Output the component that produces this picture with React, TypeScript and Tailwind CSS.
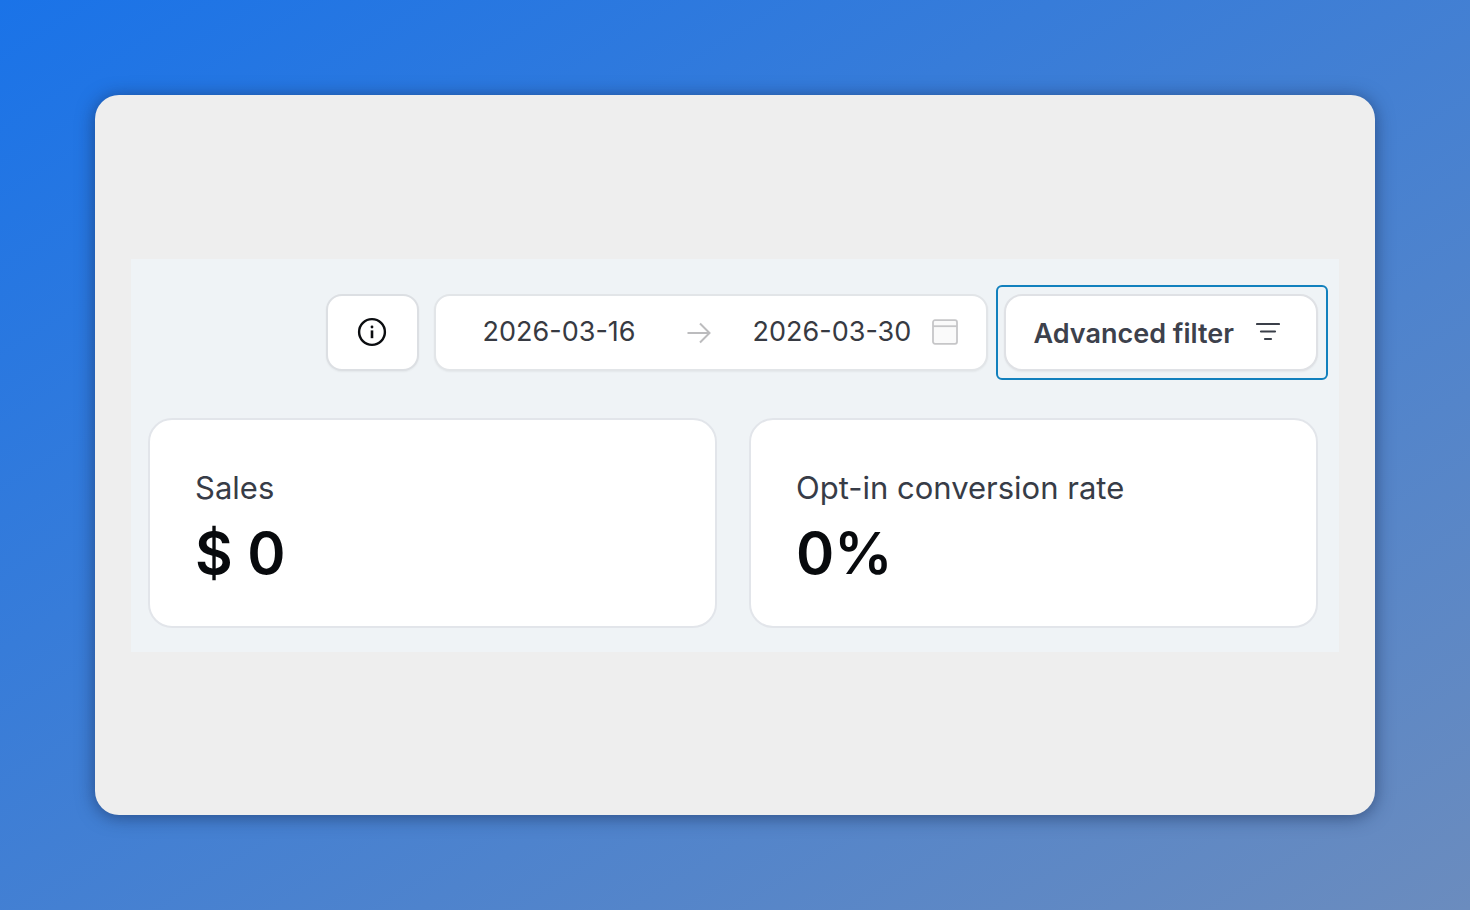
import { useState } from "react";

function InfoIcon() {
  return (
    <svg viewBox="0 0 30 30" className="size-[30px]" fill="none" aria-hidden="true">
      <circle cx="15" cy="15" r="12.9" stroke="#0b0d10" strokeWidth="2.4" />
      <circle cx="15" cy="10" r="1.4" fill="#0b0d10" />
      <path d="M15 13.4v7.8" stroke="#0b0d10" strokeWidth="2.6" />
    </svg>
  );
}

function ArrowIcon() {
  return (
    <svg viewBox="0 0 24 24" className="size-6 shrink-0" fill="none" stroke="#bcbcbe" strokeWidth="2" aria-hidden="true">
      <path d="M.5 13h22M13 3.5l9.5 9.5L13 22.5" />
    </svg>
  );
}

function CalendarIcon() {
  return (
    <svg viewBox="0 0 26 26" className="size-[26px] shrink-0" fill="#fafafa" stroke="#c6c6c8" strokeWidth="1.8" aria-hidden="true">
      <rect x="1" y="1.2" width="24" height="23.6" rx="2" />
      <path d="M1 7.2h24" />
    </svg>
  );
}

function FilterIcon() {
  return (
    <svg viewBox="0 0 24 20" className="h-5 w-6 shrink-0" fill="none" stroke="#3a3f49" strokeWidth="2.2" strokeLinecap="round" aria-hidden="true">
      <path d="M1 2h22M5 9.5h14M9 17h6" />
    </svg>
  );
}

function DateField({ label, initial }: { label: string; initial: string }) {
  const [value, setValue] = useState(initial);
  return (
    <input
      type="text"
      aria-label={label}
      value={value}
      onChange={(e) => setValue(e.target.value)}
      className="h-10 w-[162px] bg-transparent text-[27px] text-[#373a42] outline-none"
    />
  );
}

function StatCard({ label, value }: { label: string; value: string }) {
  return (
    <section className="flex flex-col rounded-3xl border-2 border-[#e2e5ea] bg-white px-[45px] pt-12 pb-[38px]">
      <h2 className="text-[31px] leading-10 text-[#373c47]">{label}</h2>
      <p className="pt-[10px] text-[58px] leading-[70px] font-semibold text-[#080a0d]">{value}</p>
    </section>
  );
}

export default function App() {
  return (
    <main className="flex min-h-screen bg-linear-to-br/srgb from-[#1a73e8] to-[#6b8cbe] p-[95px] font-['Inter',sans-serif]">
      <div className="flex flex-1 items-center rounded-3xl bg-[#eeeeee] px-9 shadow-[0_2px_18px_rgba(20,40,80,0.6)]">
        <div className="flex-1 bg-[#eff3f6] pt-[26px] pr-[21px] pb-6 pl-[17px]">
          <div className="-mr-[10px] flex items-center justify-end">
            <button
              type="button"
              aria-label="Information"
              className="mr-[15px] flex h-[77px] w-[93px] items-center justify-center rounded-2xl border-2 border-[#dcdfe3] bg-white shadow-xs"
            >
              <InfoIcon />
            </button>
            <div className="mr-2 flex h-[77px] items-center rounded-2xl border-2 border-[#e2e5e8] bg-white pr-7 pl-[47px] shadow-xs">
              <DateField label="Start date" initial="2026-03-16" />
              <div className="px-[42px]">
                <ArrowIcon />
              </div>
              <DateField label="End date" initial="2026-03-30" />
              <div className="pl-[17px]">
                <CalendarIcon />
              </div>
            </div>
            <div className="rounded-md border-2 border-[#1280bd] py-[7px] pr-2 pl-[6px]">
              <button
                type="button"
                className="flex h-[77px] items-center gap-[22px] rounded-[18px] border-2 border-[#dfe1e5] bg-white pr-9 pl-7 text-[27px] font-semibold text-[#3d414c] shadow-xs"
              >
                <span className="pt-1">Advanced filter</span>
                <FilterIcon />
              </button>
            </div>
          </div>
          <div className="grid grid-cols-2 gap-8 pt-[38px]">
            <StatCard label="Sales" value="$ 0" />
            <StatCard label="Opt-in conversion rate" value="0%" />
          </div>
        </div>
      </div>
    </main>
  );
}
